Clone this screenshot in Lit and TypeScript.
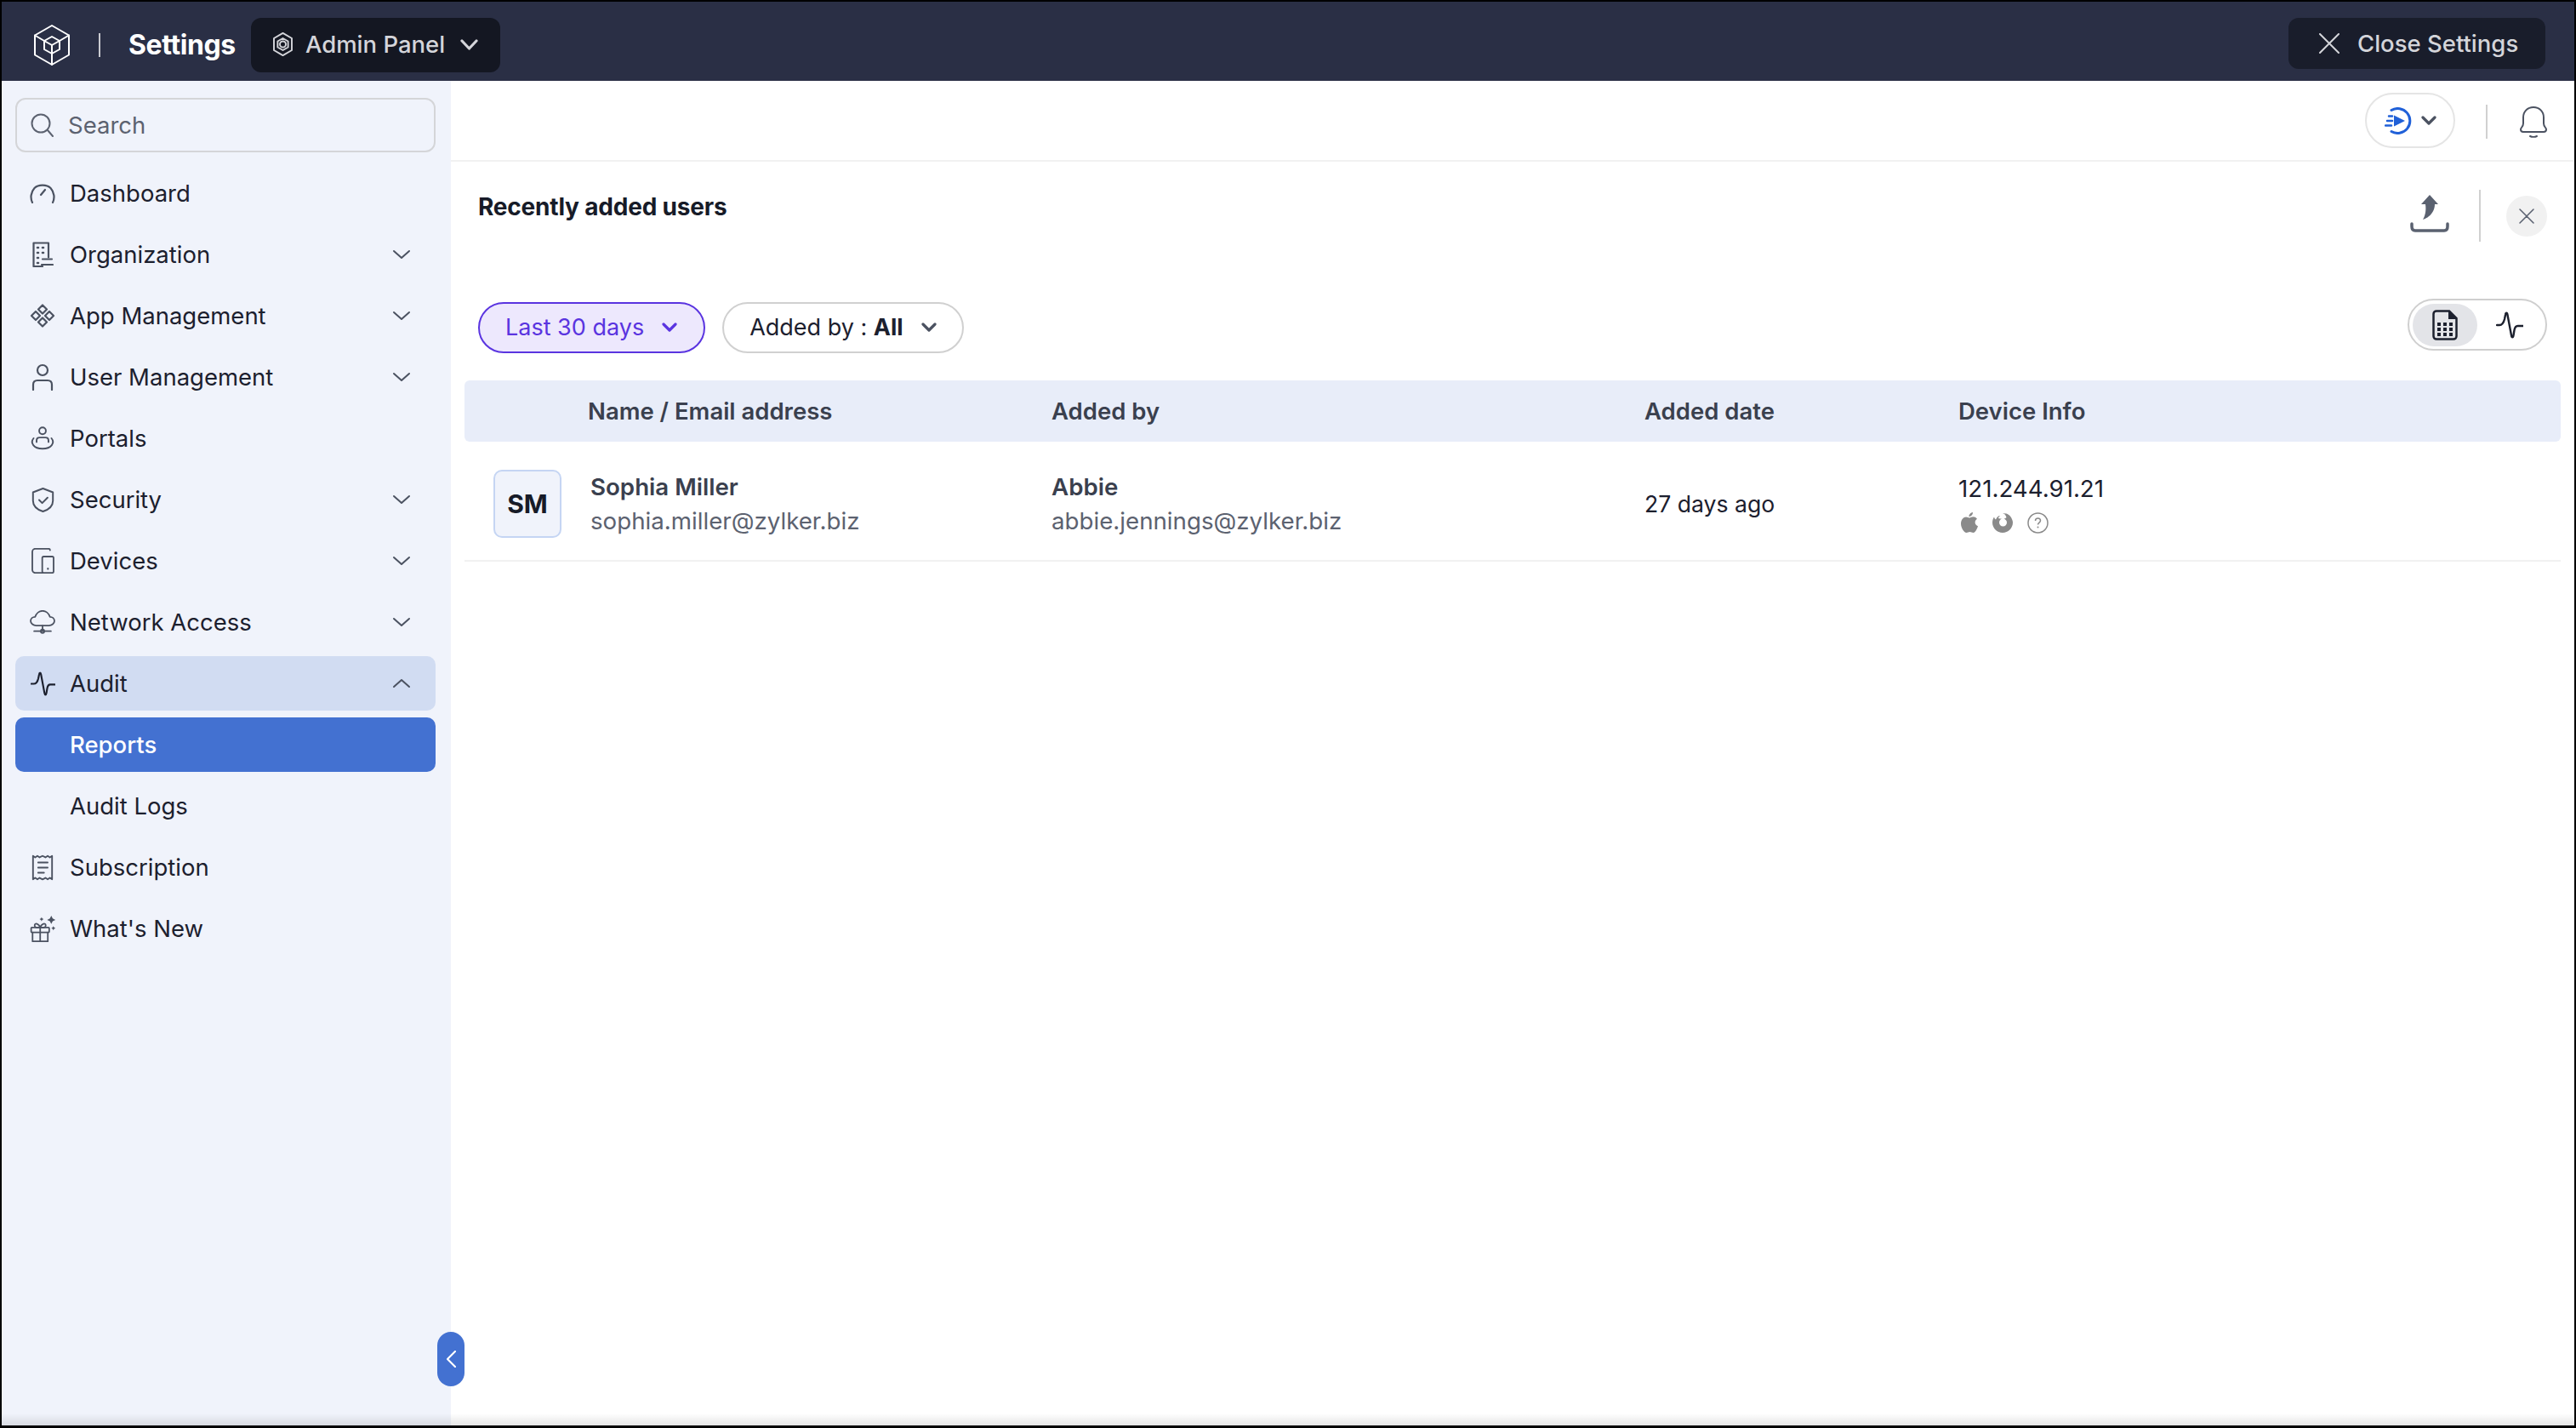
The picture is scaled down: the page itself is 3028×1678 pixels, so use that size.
import { LitElement, css, html, svg } from "lit";
import { customElement } from "lit/decorators.js";

// icons are drawn on their own grid (vw x vh) and shown at the measured size (w x h)
const icon = (
  vw: number,
  vh: number,
  w: number,
  h: number,
  body: unknown,
  sw = 2.2
) => html`<svg
  width=${w}
  height=${h}
  viewBox="0 0 ${vw} ${vh}"
  fill="none"
  stroke="currentColor"
  stroke-width=${sw}
  stroke-linecap="round"
  stroke-linejoin="round"
>
  ${body}
</svg>`;

const line = (w: number, h: number, body: unknown, sw = 2) =>
  icon(w, h, w, h, body, sw);

const chevronDown = line(22, 12, svg`<path d="M2 2l9 8 9-8"/>`);
const chevronUp = line(22, 12, svg`<path d="M2 10l9-8 9 8"/>`);
const chevronBold = (w = 18, h = 11) =>
  line(w, h, svg`<path d="M2 2l${w / 2 - 2} ${h - 4} ${w / 2 - 2}-${h - 4}"/>`, 3.2);

const pulsePath = svg`<path d="M1 16h3c3 0 5-3 6-7l1-5c.5-3 2-3 2.500 0l4.500 24c.5 3 2 3 2.500 0l1-6c.5-3 2-5 4-5h6"/>`;
const pulse = (s = 32, sw = 2.4) => icon(32, 32, s, s, pulsePath, sw);

const navIcons: Record<string, unknown> = {
  dashboard: icon(
    30,
    24,
    30,
    24,
    svg`<path d="M3 23C.5 18 1 11 5.500 6 10 1.500 20 1.500 24.500 6 29 11 29.500 18 27 23"/><path d="M13 14l5-6"/>`
  ),
  organization: icon(
    25,
    30,
    25,
    30,
    svg`<path d="M12 29H1.500V1.500H19v17"/><path d="M6 7h1M12 7h1M6 13h1M12 13h1M6 19h1M6 25h1" stroke-width="2.600"/><path d="M12 20.500h11M11 27h13"/>`
  ),
  apps: icon(
    30,
    28,
    30,
    28,
    svg`<path d="M15 1.500l5 5-5 5-5-5zM7 9l5 5-5 5-5-5zM23 9l5 5-5 5-5-5zM15 16.500l5 5-5 5-5-5z"/>`
  ),
  user: icon(
    26,
    32,
    26,
    32,
    svg`<circle cx="13" cy="8" r="6"/><path d="M2 31v-6c0-3 2-5 5-5h12c3 0 5 2 5 5v6"/>`
  ),
  portals: icon(34, 32, 30, 28, svg`<circle cx="17" cy="6" r="4.500"/><path d="M9 21v-2c0-3 2-4 4-4h8c2 0 4 1 4 4v2"/><path d="M5 16c-5 6 0 14 12 14s17-8 12-14"/>`),
  security: icon(
    30,
    34,
    27,
    31,
    svg`<path d="M15 2l13 5v11c0 8-7 12-13 14C9 30 2 26 2 18V7z"/><path d="M10 17l4 4 7-7"/>`
  ),
  devices: icon(
    32,
    36,
    27,
    30,
    svg`<path d="M26 3c0-1-1-2-2-2H5C3 1 1 3 1 5v26c0 2 2 4 4 4h10"/><rect x="15" y="12" width="16" height="23" rx="2"/><path d="M23 29v.5" stroke-width="2.600"/>`
  ),
  network: icon(
    36,
    34,
    30,
    28,
    svg`<path d="M9 22C5 22 1 19 1 15.500s3-6 6.500-6C9 5 13 1 18 1s9 4 10.500 8.500c3.500 0 6.500 2.500 6.500 6S31 22 27 22z"/><path d="M18 22v8M6 30h24"/><circle cx="18" cy="30" r="2.500"/>`
  ),
  subscription: icon(
    30,
    36,
    26,
    31,
    svg`<path d="M2 2l3 2 3-2 3 2 4-2 4 2 3-2 3 2 3-2v32l-3-2-3 2-3-2-4 2-4-2-3 2-3-2-3 2z"/><path d="M9 11h13M9 18h13M9 25h8"/>`
  ),
  gift: icon(
    38,
    38,
    31,
    31,
    svg`<rect x="2" y="17" width="26" height="7" rx="1"/><path d="M4 24v13h22V24M15 17v20M15 17c-2-6-8-7-8-3s5 3 8 3zM15 17c2-6 8-7 8-3s-5 3-8 3z"/><path fill="currentColor" stroke="none" d="M31 0l2 4 4 2-4 2-2 4-2-4-4-2 4-2zM17 2l1 2 2 1-2 1-1 2-1-2-2-1 2-1zM34 15l1 2 2 1-2 1-1 2-1-2-2-1 2-1z"/>`
  ),
};

interface NavItem {
  label: string;
  icon?: string | "pulse";
  chevron?: "down" | "up";
  state?: "open" | "active";
}

const nav: NavItem[] = [
  { label: "Dashboard", icon: "dashboard" },
  { label: "Organization", icon: "organization", chevron: "down" },
  { label: "App Management", icon: "apps", chevron: "down" },
  { label: "User Management", icon: "user", chevron: "down" },
  { label: "Portals", icon: "portals" },
  { label: "Security", icon: "security", chevron: "down" },
  { label: "Devices", icon: "devices", chevron: "down" },
  { label: "Network Access", icon: "network", chevron: "down" },
  { label: "Audit", icon: "pulse", chevron: "up", state: "open" },
  { label: "Reports", state: "active" },
  { label: "Audit Logs" },
  { label: "Subscription", icon: "subscription" },
  { label: "What's New", icon: "gift" },
];

@customElement("app-root")
export class AppRoot extends LitElement {
  static styles = css`
    :host {
      display: block;
      height: 1678px;
      box-sizing: border-box;
      border: 2px solid #000;
      border-bottom-width: 3px;
      background: #fff;
      font-family: Inter, "Noto Sans", sans-serif;
      color: #1c202e;
      overflow: hidden;
    }
    svg {
      display: block;
      flex: none;
    }
    .shell {
      display: flex;
      flex-direction: column;
      height: 100%;
    }
    .topbar {
      flex: none;
      height: 93px;
      box-sizing: border-box;
      background: #2a2f45;
      display: flex;
      align-items: center;
      padding: 9px 34px 0 38px;
      color: #fff;
    }
    .topbar .sep {
      width: 2px;
      height: 28px;
      background: #c9cad0;
      margin: 0 33px 0 34px;
    }
    .topbar .title {
      font-size: 32px;
      font-weight: 700;
      letter-spacing: -0.4px;
      padding-bottom: 2px;
    }
    .panel {
      display: flex;
      align-items: center;
      height: 64px;
      box-sizing: border-box;
      margin-left: 18px;
      padding: 0 26px 2px 25px;
      background: #141722;
      border-radius: 12px;
      color: #d4d5da;
      font-size: 27.5px;
      font-weight: 500;
      gap: 14px;
    }
    .panel .chev {
      margin-left: 4px;
      color: #d4d5da;
    }
    .close-settings {
      margin-left: auto;
      margin-top: -4px;
      height: 60px;
      width: 302px;
      box-sizing: border-box;
      padding-left: 36px;
      display: flex;
      align-items: center;
      gap: 21px;
      background: #191d2b;
      border-radius: 12px;
      color: #d4d5da;
      font-size: 27.5px;
      font-weight: 500;
    }
    .body {
      flex: 1;
      display: flex;
      min-height: 0;
      position: relative;
    }
    .body::after {
      content: "";
      position: absolute;
      left: 0;
      right: 0;
      bottom: 0;
      height: 14px;
      background: linear-gradient(rgba(0, 0, 0, 0), rgba(0, 0, 0, 0.1));
      pointer-events: none;
    }
    .sidebar {
      flex: none;
      width: 528px;
      box-sizing: border-box;
      background: #f0f3fb;
      padding: 20px 18px 0 16px;
      display: flex;
      flex-direction: column;
      gap: 8px;
    }
    .search {
      display: flex;
      align-items: center;
      gap: 17px;
      height: 64px;
      box-sizing: border-box;
      border: 2px solid #d4d5d8;
      border-radius: 12px;
      padding-left: 16px;
      color: #5c6270;
      font-size: 27.5px;
      margin-bottom: 8px;
    }
    .row {
      height: 64px;
      display: flex;
      align-items: center;
      border-radius: 10px;
      font-size: 27.5px;
      color: #1c202e;
      position: relative;
    }
    .row .icon {
      width: 64px;
      display: flex;
      justify-content: center;
      color: #4b5261;
    }
    .row .label {
      flex: 1;
    }
    .row .chevron {
      width: 22px;
      margin-right: 29px;
      color: #4b5261;
    }
    .row.open {
      background: #d1dcf2;
    }
    .row.open .icon {
      color: #1c202e;
    }
    .row.active {
      background: #4371d1;
      color: #fff;
      font-weight: 500;
    }
    .main {
      flex: 1;
      min-width: 0;
      display: flex;
      flex-direction: column;
    }
    .utility {
      flex: none;
      height: 95px;
      box-sizing: border-box;
      border-bottom: 2px solid #f1f1f1;
      display: flex;
      align-items: center;
      justify-content: flex-end;
      padding-right: 31px;
      padding-top: 2px;
    }
    .speed {
      display: flex;
      align-items: center;
      gap: 11px;
      width: 106px;
      height: 65px;
      box-sizing: border-box;
      border: 2px solid #e5e5e5;
      border-radius: 33px;
      padding-left: 21px;
      color: #4b5261;
      margin-top: -2px;
    }
    .vsep {
      width: 2px;
      background: #d0d0d0;
    }
    .utility .vsep {
      height: 40px;
      margin: 0 37px 0 36px;
    }
    .bell {
      color: #4b5261;
    }
    .report-head {
      flex: none;
      display: flex;
      justify-content: space-between;
      padding: 33px 32px 0 32px;
      height: 164px;
      box-sizing: border-box;
    }
    .report-head h1 {
      margin: 0;
      font-size: 28px;
      font-weight: 700;
      line-height: 40px;
      letter-spacing: -0.2px;
      color: #171b28;
    }
    .head-actions {
      display: flex;
      align-items: flex-start;
      color: #5a6170;
    }
    .head-actions .vsep {
      height: 61px;
      margin: 0 30px 0 36px;
    }
    .head-actions .export {
      margin-top: 6px;
      margin-right: -1px;
    }
    .close-round {
      width: 48px;
      height: 48px;
      margin-top: 7px;
      border-radius: 50%;
      background: #f1f1f1;
      display: flex;
      align-items: center;
      justify-content: center;
    }
    .filters {
      flex: none;
      height: 60px;
      display: flex;
      align-items: center;
      gap: 20px;
      padding-left: 32px;
      padding-right: 32px;
      margin-top: 1px;
    }
    .pill {
      height: 60px;
      box-sizing: border-box;
      display: flex;
      align-items: center;
      gap: 21px;
      border-radius: 30px;
      padding: 0 30px 2px;
      border: 2px solid #d0d0d0;
      font-size: 27px;
      color: #1c202e;
    }
    .pill.on {
      background: #ede8fd;
      border-color: #5a34e0;
      color: #5a34e0;
      padding-right: 31px;
    }
    .pill b {
      font-weight: 700;
    }
    .pill .caret {
      color: #4b5261;
    }
    .pill.on .caret {
      color: #5a34e0;
    }
    .toggle {
      margin-left: auto;
      margin-top: -7px;
      width: 164px;
      height: 61px;
      box-sizing: border-box;
      border: 2px solid #cfcfcf;
      border-radius: 31px;
      display: flex;
      align-items: center;
      padding-left: 4px;
      color: #1c202e;
    }
    .toggle .sel {
      width: 76px;
      height: 50px;
      border-radius: 25px;
      background: #e3e4e8;
      display: flex;
      align-items: center;
      justify-content: center;
    }
    .toggle .alt {
      margin-left: 22px;
    }
    .table {
      flex: none;
      margin: 32px 16px 0 16px;
    }
    .thead,
    .trow {
      display: grid;
      grid-template-columns: 145px 545px 697px 369px 1fr;
      align-items: center;
    }
    .thead {
      height: 72px;
      background: #e8edf9;
      border-radius: 6px;
      font-size: 27.5px;
      font-weight: 600;
      color: #3a404e;
    }
    .trow {
      height: 141px;
      box-sizing: border-box;
      border-bottom: 2px solid #f1f1f1;
      padding-top: 7px;
      font-size: 27.7px;
    }
    .avatar-cell {
      padding-left: 34px;
    }
    .avatar {
      width: 80px;
      height: 80px;
      box-sizing: border-box;
      border: 2px solid #c5d5f3;
      border-radius: 10px;
      background: #f0f3fb;
      display: flex;
      align-items: center;
      justify-content: center;
      font-size: 30px;
      font-weight: 700;
      color: #171b28;
    }
    .stack {
      display: flex;
      flex-direction: column;
      gap: 8px;
      line-height: 32px;
    }
    .stack .strong {
      font-weight: 600;
      color: #3a404e;
    }
    .stack .soft {
      color: #5c6270;
    }
    .name-cell {
      padding-left: 3px;
    }
    .date {
      font-size: 26.6px;
    }
    .devices {
      display: flex;
      align-items: center;
      gap: 17px;
      padding-left: 3px;
      color: #8a8a8a;
    }
    .ip-cell {
      gap: 12px;
    }
    .handle {
      position: absolute;
      left: 512px;
      bottom: 46px;
      width: 32px;
      height: 64px;
      border-radius: 16px;
      background: #4371d1;
      color: #fff;
      display: flex;
      align-items: center;
      justify-content: center;
    }
  `;

  private renderRow(item: NavItem) {
    const cls = `row ${item.state ?? ""}`;
    const glyph =
      item.icon === "pulse" ? pulse(29) : item.icon ? navIcons[item.icon] : null;
    return html`<div class=${cls}>
      <span class="icon">${glyph}</span>
      <span class="label">${item.label}</span>
      ${item.chevron
        ? html`<span class="chevron">
            ${item.chevron === "up" ? chevronUp : chevronDown}
          </span>`
        : null}
    </div>`;
  }

  render() {
    return html`
      <div class="shell">
        <header class="topbar">
          ${line(
            42,
            48,
            svg`<path d="M21 1l20 11.500v23L21 47 1 35.500v-23z"/><path d="M21 14l9 5v10l-9 5-9-5V19z"/><path d="M12 19l9 5 9-5M21 24v10M1 12.500L12 19M41 12.500L30 19M21 47V34"/>`
          )}
          <span class="sep"></span>
          <span class="title">Settings</span>
          <div class="panel">
            ${icon(
              26,
              32,
              25,
              28,
              svg`<path d="M13 1l12 7v16l-12 7-12-7V8z"/><circle cx="13" cy="16" r="4"/><path d="M13 8l7 4v8l-7 4-7-4v-8z"/>`
            )}
            <span>Admin Panel</span>
            <span class="chev">${chevronBold(21, 13)}</span>
          </div>
          <div class="close-settings">
            ${line(24, 24, svg`<path d="M1 1l22 22M23 1L1 23"/>`)}
            <span>Close Settings</span>
          </div>
        </header>
        <div class="body">
          <aside class="sidebar">
            <div class="search">
              ${line(
                27,
                28,
                svg`<circle cx="12" cy="12" r="10.500"/><path d="M20 20l6 7"/>`
              )}
              <span>Search</span>
            </div>
            ${nav.map((item) => this.renderRow(item))}
          </aside>
          <main class="main">
            <div class="utility">
              <div class="speed">
                <svg width="32" height="32" viewBox="0 0 32 32" fill="none">
                  <path
                    d="M8 3.500A14.500 14.500 0 1 1 8 28.500"
                    stroke="#2060d8"
                    stroke-width="3"
                    stroke-linecap="round"
                  />
                  <path d="M11 9.500L24 16 11 22.500z" fill="#2060d8" />
                  <path
                    d="M5 10.500h4M3 16h6M1 21.500h7"
                    stroke="#2060d8"
                    stroke-width="2.500"
                    stroke-linecap="round"
                  />
                </svg>
                ${chevronBold(18, 11)}
              </div>
              <span class="vsep"></span>
              <span class="bell">
                ${line(
                  34,
                  38,
                  svg`<path d="M5 21V14C5 7 10 2 17 2s12 5 12 12v7c0 4 3 5 3 7s-1 3-3 3H5c-2 0-3-1-3-3s3-3 3-7z"/><path d="M13 36c2 1 6 1 8 0"/>`
                )}
              </span>
            </div>
            <div class="report-head">
              <h1>Recently added users</h1>
              <div class="head-actions">
                <span class="export">
                  <svg width="46" height="44" viewBox="0 0 46 44" fill="none">
                    <path
                      d="M23 0L33 11h-4c0 8-5 15-14 18 3-5 4-11 3-18h-5z"
                      fill="currentColor"
                    />
                    <path
                      d="M2 34v3c0 3 1 5 4 5h34c3 0 4-2 4-5v-3"
                      stroke="currentColor"
                      stroke-width="3.500"
                      stroke-linecap="round"
                    />
                  </svg>
                </span>
                <span class="vsep"></span>
                <span class="close-round">
                  ${line(18, 18, svg`<path d="M1 1l16 16M17 1L1 17"/>`, 1.5)}
                </span>
              </div>
            </div>
            <div class="filters">
              <div class="pill on">
                <span>Last 30 days</span>
                <span class="caret">${chevronBold(18, 11)}</span>
              </div>
              <div class="pill">
                <span>Added by : <b>All</b></span>
                <span class="caret">${chevronBold(18, 11)}</span>
              </div>
              <div class="toggle">
                <span class="sel">
                  <svg width="30" height="36" viewBox="0 0 30 36" fill="none">
                    <path
                      d="M5 1.500h15L28.500 10v21c0 2-1.500 3.500-3.500 3.500H5c-2 0-3.500-1.500-3.500-3.500V5c0-2 1.500-3.500 3.500-3.500z"
                      stroke="currentColor"
                      stroke-width="2.500"
                    />
                    <path d="M19 1l10 10H19z" fill="currentColor" />
                    <path
                      d="M6 15h4v4H6zM13 15h4v4h-4zM20 15h4v4h-4zM6 21h4v4H6zM13 21h4v4h-4zM20 21h4v4h-4zM6 27h4v4H6zM13 27h4v4h-4zM20 27h4v4h-4z"
                      fill="currentColor"
                    />
                  </svg>
                </span>
                <span class="alt">${pulse(32)}</span>
              </div>
            </div>
            <section class="table">
              <div class="thead">
                <span></span>
                <span>Name / Email address</span>
                <span>Added by</span>
                <span>Added date</span>
                <span>Device Info</span>
              </div>
              <div class="trow">
                <div class="avatar-cell"><div class="avatar">SM</div></div>
                <div class="stack name-cell">
                  <span class="strong">Sophia Miller</span>
                  <span class="soft">sophia.miller@zylker.biz</span>
                </div>
                <div class="stack">
                  <span class="strong">Abbie</span>
                  <span class="soft">abbie.jennings@zylker.biz</span>
                </div>
                <div class="date">27 days ago</div>
                <div class="stack ip-cell">
                  <span>121.244.91.21</span>
                  <div class="devices">
                    <svg width="20" height="24" viewBox="0 0 20 24" fill="currentColor">
                      <path
                        d="M14 0c.2 2.500-2 5-4.500 5C9.300 2.500 11.500.3 14 0zM10 6.500c1 0 2.500-1.200 4.500-1.200 1.500 0 3.500.8 4.500 2.500-3.500 2-3 7 1 8.500-1 3-3 7.700-5.500 7.700-1.500 0-2.500-1-4-1s-2.700 1-4 1C3.500 24 0 18 0 13.500 0 8.500 3 5.500 6 5.500c1.700 0 3 1 4 1z"
                      />
                    </svg>
                    <svg width="24" height="24" viewBox="0 0 24 24" fill="currentColor">
                      <path
                        fill-rule="evenodd"
                        d="M12 1c2 0 4 .5 5 1.500L15 1c3 1 5 2 7 5 1 2 2 4 2 6 0 6.500-5.500 12-12 12S0 18.500 0 12C0 9 1 7 2 5.500 2.500 7 3 8 4 8.500 5 6 7 4 9 4 8 5 7 6 7 7c1 .5 3 .5 4 .5C9 8.500 8 10 8 12c0 2.500 2 4.500 4.500 4.500S17 14.500 17 12c0-2-1.500-4-3.500-4.500 1 0 2-.5 3-1.500C15.500 3 14 1.500 12 1z"
                      />
                    </svg>
                    <svg width="25" height="25" viewBox="0 0 25 25" fill="none">
                      <circle cx="12.500" cy="12.500" r="11.500" stroke="currentColor" stroke-width="1.500" />
                      <path
                        d="M9.500 10c0-2 1.300-3 3-3s3 1 3 2.800c0 2.200-3 2.400-3 4.700"
                        stroke="currentColor"
                        stroke-width="1.500"
                      />
                      <circle cx="12.500" cy="17.500" r="1" fill="currentColor" />
                    </svg>
                  </div>
                </div>
              </div>
            </section>
          </main>
          <div class="handle">
            ${line(11, 20, svg`<path d="M10 1L1 10l9 9"/>`, 2.2)}
          </div>
        </div>
      </div>
    `;
  }
}
